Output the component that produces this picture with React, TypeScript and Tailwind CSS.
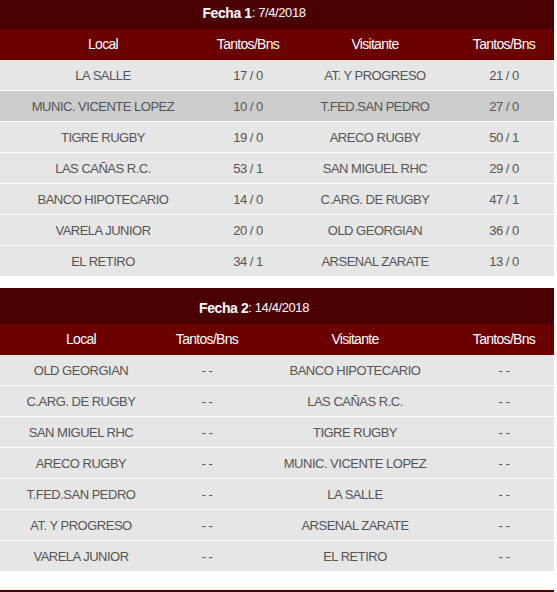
import React from "react";

type Match = { l: string; ls: string; v: string; vs: string; hl?: boolean };

const fecha1: Match[] = [
  { l: "LA SALLE", ls: "17 / 0", v: "AT. Y PROGRESO", vs: "21 / 0" },
  { l: "MUNIC. VICENTE LOPEZ", ls: "10 / 0", v: "T.FED.SAN PEDRO", vs: "27 / 0", hl: true },
  { l: "TIGRE RUGBY", ls: "19 / 0", v: "ARECO RUGBY", vs: "50 / 1" },
  { l: "LAS CAÑAS R.C.", ls: "53 / 1", v: "SAN MIGUEL RHC", vs: "29 / 0" },
  { l: "BANCO HIPOTECARIO", ls: "14 / 0", v: "C.ARG. DE RUGBY", vs: "47 / 1" },
  { l: "VARELA JUNIOR", ls: "20 / 0", v: "OLD GEORGIAN", vs: "36 / 0" },
  { l: "EL RETIRO", ls: "34 / 1", v: "ARSENAL ZARATE", vs: "13 / 0" },
];

const fecha2: Match[] = [
  { l: "OLD GEORGIAN", ls: "- -", v: "BANCO HIPOTECARIO", vs: "- -" },
  { l: "C.ARG. DE RUGBY", ls: "- -", v: "LAS CAÑAS R.C.", vs: "- -" },
  { l: "SAN MIGUEL RHC", ls: "- -", v: "TIGRE RUGBY", vs: "- -" },
  { l: "ARECO RUGBY", ls: "- -", v: "MUNIC. VICENTE LOPEZ", vs: "- -" },
  { l: "T.FED.SAN PEDRO", ls: "- -", v: "LA SALLE", vs: "- -" },
  { l: "AT. Y PROGRESO", ls: "- -", v: "ARSENAL ZARATE", vs: "- -" },
  { l: "VARELA JUNIOR", ls: "- -", v: "EL RETIRO", vs: "- -" },
];

function Section({
  num,
  date,
  rows,
  cols,
}: {
  num: string;
  date: string;
  rows: Match[];
  cols: string;
}) {
  return (
    <div className="w-[554px]">
      <div className="h-[36px] bg-[#4b0000] flex items-center justify-center pr-[46px] pt-[4px] text-white">
        <span className="font-bold text-[14px] tracking-[-0.4px]">Fecha {num}</span>
        <span className="text-[13px] tracking-[-0.4px]">: {date}</span>
      </div>
      <div className={`grid ${cols} h-[31px] items-center bg-[#6b0000] text-white text-[14px] tracking-[-0.7px] text-center`}>
        <div>Local</div>
        <div>Tantos/Bns</div>
        <div>Visitante</div>
        <div>Tantos/Bns</div>
      </div>
      {rows.map((r, i) => (
        <div key={i} className="h-[31px] border-b border-white">
          <div
            className={`grid ${cols} h-[30px] pt-[2px] items-center text-[13px] tracking-[-0.5px] text-[#555555] text-center ${
              r.hl ? "bg-[#cccccc]" : "bg-[#e6e6e6]"
            }`}
          >
            <div className="whitespace-nowrap">{r.l}</div>
            <div className="whitespace-nowrap">{r.ls}</div>
            <div className="whitespace-nowrap">{r.v}</div>
            <div className="whitespace-nowrap">{r.vs}</div>
          </div>
        </div>
      ))}
    </div>
  );
}

export default function App() {
  return (
    <div
      className="w-[557px] h-[592px] overflow-hidden bg-white"
      style={{ fontFamily: '"Liberation Sans", Arial, sans-serif' }}
    >
      <div className="-mt-[7px] flex flex-col">
        <Section num="1" date="7/4/2018" rows={fecha1} cols="grid-cols-[206px_84px_170px_88px]" />
        <div className="h-[11px]" />
        <Section num="2" date="14/4/2018" rows={fecha2} cols="grid-cols-[162px_90px_206px_92px]" />
        <div className="h-[18px]" />
        <div className="w-[554px] h-[36px] bg-[#4b0000]" />
      </div>
    </div>
  );
}
